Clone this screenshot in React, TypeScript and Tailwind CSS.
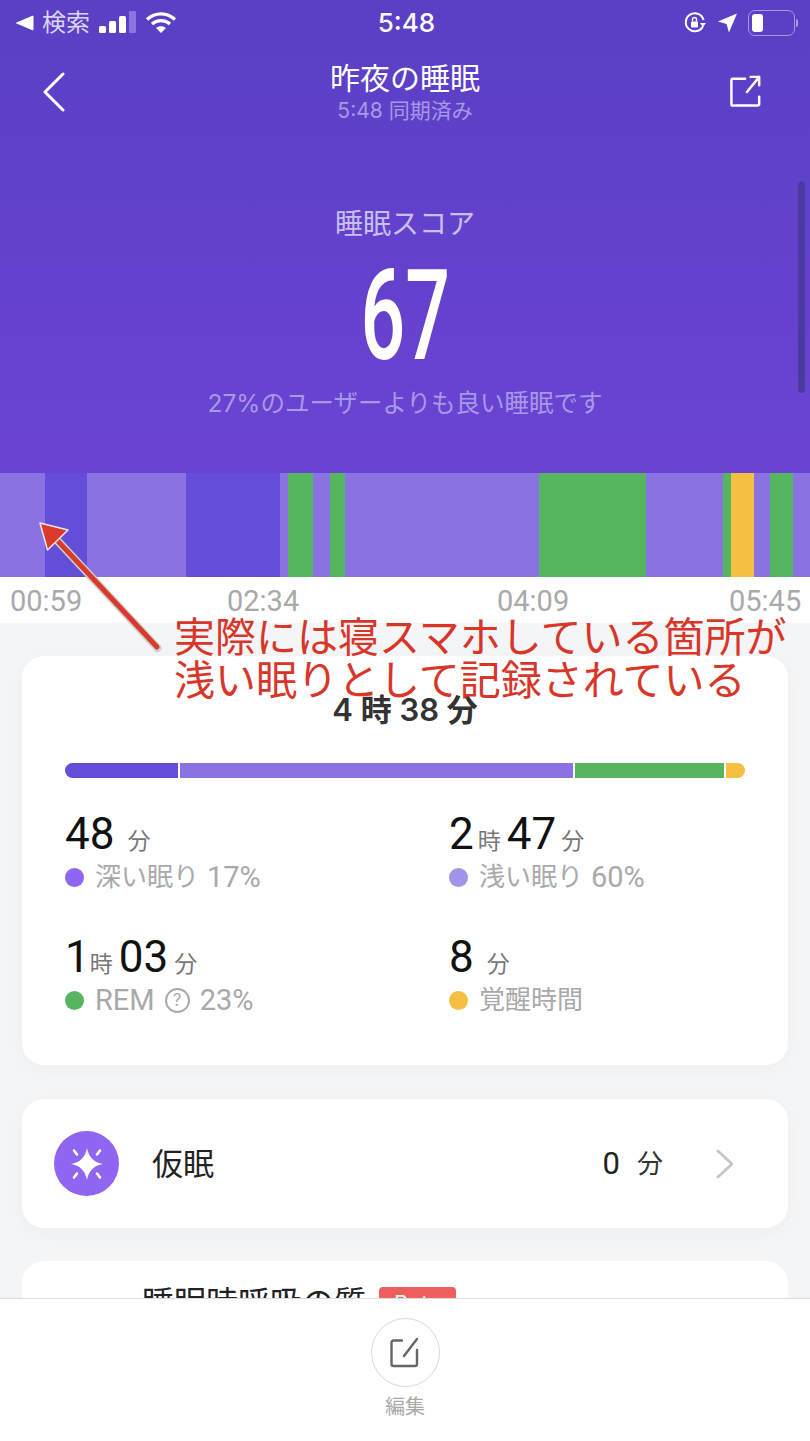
const jp = "font-['Inter','Noto_Sans_CJK_JP',sans-serif]";
const num = "font-['Roboto','Noto_Sans_CJK_JP',sans-serif]";

const chart = [
  "w-[45px] bg-[#8a72e3]",
  "w-[42px] bg-[#644dd8]",
  "w-[99px] bg-[#8a72e3]",
  "w-[94px] bg-[#644dd8]",
  "w-[8px] bg-[#8a72e3]",
  "w-[25px] bg-[#55b65f]",
  "w-[17px] bg-[#8a72e3]",
  "w-[15px] bg-[#55b65f]",
  "w-[194px] bg-[#8a72e3]",
  "w-[107px] bg-[#55b65f]",
  "w-[77px] bg-[#8a72e3]",
  "w-[8px] bg-[#55b65f]",
  "w-[23px] bg-[#f5bf42]",
  "w-[16px] bg-[#8a72e3]",
  "w-[23px] bg-[#55b65f]",
  "w-[17px] bg-[#8a72e3]",
];

function StatusBar() {
  return (
    <div className="flex h-[45px] items-center justify-between pl-[15px] pr-[12px] text-white">
      <div className="flex w-[200px] items-center">
        <svg width="20" height="16" viewBox="0 0 20 16" className="mr-[7px]">
          <path d="M1.5 8 L18 1 V15 Z" fill="#fff" stroke="#fff" strokeLinejoin="round" />
        </svg>
        <span className="text-[24px] leading-none text-[#dcd6f6]">検索</span>
        <svg width="38" height="23" viewBox="0 0 38 23" className="ml-[9px]">
          <rect x="0" y="15" width="7" height="7" rx="1.5" fill="#fff" />
          <rect x="10" y="10" width="7" height="12" rx="1.5" fill="#fff" />
          <rect x="20" y="5" width="7" height="17" rx="1.5" fill="#fff" />
          <rect x="30" y="0" width="7" height="22" rx="1" fill="#8a76dd" />
        </svg>
        <svg width="32" height="24" viewBox="0 0 32 24" className="ml-[8px]" fill="none" stroke="#fff" strokeWidth="3.4">
          <path d="M2 8.5 C10 1 22 1 30 8.5" />
          <path d="M7 13 C12 8.5 20 8.5 25 13" />
          <path d="M16 22 L11 17 C14 14.5 18 14.5 21 17 Z" fill="#fff" stroke="none" />
        </svg>
      </div>
      <span className="text-[26px] font-medium leading-none">5:48</span>
      <div className="flex w-[200px] items-center justify-end gap-[10px]">
        <svg width="24" height="24" viewBox="0 0 24 24" fill="none">
          <path d="M20 15 A9 9 0 1 1 20.5 9" stroke="#fff" strokeWidth="2" />
          <path d="M17 12 h6 l-3 4 z" fill="#fff" />
          <rect x="8" y="10.5" width="7" height="6" rx="1" fill="#fff" />
          <path d="M9.5 10.5 V8.5 a2 2 0 0 1 4 0 V10.5" stroke="#fff" strokeWidth="1.4" />
        </svg>
        <svg width="21" height="22" viewBox="0 0 22 22">
          <path d="M21 1 L12.5 21 L10 12 L1 9.5 Z" fill="#fff" />
        </svg>
        <div className="flex items-center">
          <div className="flex h-[26px] w-[47px] items-center rounded-[7px] border-[1.5px] border-[#a897ea] p-[3px]">
            <div className="h-full w-[11px] rounded-[3px] bg-white" />
          </div>
          <div className="ml-[1px] h-[8px] w-[2px] rounded-r bg-[#a897ea]" />
        </div>
      </div>
    </div>
  );
}

function Hero() {
  return (
    <div className="relative h-[428px] bg-gradient-to-b from-[#5b40c6] to-[#6b43d3]">
      <div className="grid h-[94px] grid-cols-[1fr_auto_1fr] items-start pl-[42px] pr-[48px] pt-[14px] text-white">
        <svg width="24" height="40" viewBox="0 0 24 40" fill="none" stroke="#fff" strokeWidth="3" strokeLinecap="round" strokeLinejoin="round" className="mt-[13px]">
          <path d="M21 2 L3 20 L21 38" />
        </svg>
        <div className="ml-[6px] flex flex-col items-center">
          <span className="text-[30px] leading-[38px]">昨夜の睡眠</span>
          <span className="mt-[1px] text-[21px] leading-[25px] text-[#a899e8]">5:48 同期済み</span>
        </div>
        <svg width="32" height="34" viewBox="0 0 34 36" fill="none" stroke="#fff" strokeWidth="2.6" className="mt-[15px] justify-self-end" strokeLinecap="round" strokeLinejoin="round">
          <path d="M16 5 H3 a1.5 1.5 0 0 0 -1.5 1.5 V32 a1.5 1.5 0 0 0 1.5 1.5 H29.5 a1.5 1.5 0 0 0 1.5 -1.5 V24" />
          <path d="M31 3 H22 M31 3 V12 M31 3 L18 19" />
        </svg>
      </div>
      <div className="flex flex-col items-center pt-[67px]">
        <span className="text-[28px] leading-[36px] text-[#c9bff0]">睡眠スコア</span>
        <span className={`mt-[19px] origin-center scale-x-[0.62] text-[127px] font-medium leading-[110px] text-white ${num}`}>67</span>
        <span className="mt-[16px] text-[24.5px] leading-[32px] text-[#a899e8]">27%のユーザーよりも良い睡眠です</span>
      </div>
      <div className="absolute right-[5px] top-[136px] h-[212px] w-[7px] rounded-full bg-[#4b3aa0]" />
    </div>
  );
}

function Stat({ dot, label, children }: { dot: string; label: React.ReactNode; children: React.ReactNode }) {
  return (
    <div className="h-[123px]">
      <div className="flex h-[49px] items-baseline pt-[6px] text-[#111]">{children}</div>
      <div className="mt-[6px] flex h-[32px] items-center gap-[11px] text-[26px] leading-none text-[#a9a9a9]">
        <span className={`h-[19px] w-[19px] rounded-full ${dot}`} />
        <span className="flex items-center gap-[8px]">{label}</span>
      </div>
    </div>
  );
}

const Num = ({ v }: { v: string }) => <span className={`text-[44px] leading-none ${num}`}>{v}</span>;
const Unit = ({ v, l }: { v: string; l: string }) => <span className={`text-[23px] leading-none text-[#777] ${l}`}>{v}</span>;
const Pct = ({ v }: { v: string }) => <span className={`text-[29px] leading-none ${num}`}>{v}</span>;

function SummaryCard() {
  return (
    <div className="h-[409px] rounded-[22px] bg-white px-[43px] shadow-[0_4px_24px_rgba(0,0,0,0.03)]">
      <div className="pt-[36px] text-center text-[31px] font-semibold leading-[36px] text-[#333]">4 時 38 分</div>
      <div className="mt-[35px] flex h-[15px] overflow-hidden rounded-full">
        <div className="w-[113px] bg-[#644dd8]" />
        <div className="ml-[2px] w-[393px] bg-[#8a72e3]" />
        <div className="ml-[2px] w-[149px] bg-[#55b65f]" />
        <div className="ml-[2px] flex-1 bg-[#f5bf42]" />
      </div>
      <div className="mt-[28px] grid grid-cols-[384px_1fr]">
        <Stat dot="bg-[#8f66f2]" label={<>深い眠り<Pct v="17%" /></>}>
          <Num v="48" /><Unit v="分" l="ml-[13px]" />
        </Stat>
        <Stat dot="bg-[#a293e8]" label={<>浅い眠り<Pct v="60%" /></>}>
          <Num v="2" /><Unit v="時" l="ml-[4px] mr-[6px]" /><Num v="47" /><Unit v="分" l="ml-[5px]" />
        </Stat>
        <Stat
          dot="bg-[#55b65f]"
          label={
            <span className="flex items-center gap-[10px]">
              <Pct v="REM" />
              <span className="flex h-[25px] w-[25px] items-center justify-center rounded-full border-2 border-[#a9a9a9] text-[17px]">?</span>
              <Pct v="23%" />
            </span>
          }
        >
          <Num v="1" /><Unit v="時" l="mr-[6px]" /><Num v="03" /><Unit v="分" l="ml-[6px]" />
        </Stat>
        <Stat dot="bg-[#f5bf42]" label="覚醒時間">
          <Num v="8" /><Unit v="分" l="ml-[13px]" />
        </Stat>
      </div>
    </div>
  );
}

function NapCard() {
  return (
    <div className="mt-[34px] flex h-[129px] items-center rounded-[22px] bg-white pl-[32px] pr-[54px] shadow-[0_4px_24px_rgba(0,0,0,0.03)]">
      <div className="flex h-[65px] w-[65px] items-center justify-center rounded-full bg-[#8f66f2]">
        <svg width="38" height="38" viewBox="0 0 38 38" fill="#fff">
          <path d="M19 3 C20.5 12 26 17.5 35 19 C26 20.5 20.5 26 19 35 C17.5 26 12 20.5 3 19 C12 17.5 17.5 12 19 3 Z" />
          <path d="M6 5.5 L9 9.5 M32 5.5 L29 9.5 M6 32.5 L9 28.5 M32 32.5 L29 28.5" stroke="#fff" strokeWidth="2.6" strokeLinecap="round" />
        </svg>
      </div>
      <span className="ml-[33px] text-[31px] leading-none text-[#222]">仮眠</span>
      <span className={`ml-auto text-[31px] leading-none text-[#222] ${num}`}>0</span>
      <span className="ml-[17px] text-[26px] leading-none text-[#333]">分</span>
      <svg width="18" height="30" viewBox="0 0 18 30" fill="none" stroke="#c4c4c4" strokeWidth="2.6" strokeLinecap="round" strokeLinejoin="round" className="ml-[53px]">
        <path d="M2 2 L16 15 L2 28" />
      </svg>
    </div>
  );
}

function BreathCard() {
  return (
    <div className="mt-[33px] h-[120px] rounded-t-[22px] bg-white pl-[120px] pt-[24px]">
      <div className="flex items-start gap-[13px]">
        <span className="text-[32px] leading-[36px] text-[#222]">睡眠時呼吸の質</span>
        <span className="mt-[2px] rounded-[4px] bg-[#ec5f5c] px-[15px] py-[2px] text-[22px] leading-[28px] text-white">Beta</span>
      </div>
    </div>
  );
}

function BottomBar() {
  return (
    <div className="absolute inset-x-0 bottom-0 flex h-[143px] flex-col items-center border-t border-[#dcdcdc] bg-white pt-[19px]">
      <div className="flex h-[69px] w-[69px] items-center justify-center rounded-full border border-[#d9d9d9]">
        <svg width="32" height="32" viewBox="0 0 32 32" fill="none" stroke="#666" strokeWidth="2.4" strokeLinecap="round" strokeLinejoin="round">
          <path d="M13 3.5 H4.5 a2 2 0 0 0 -2 2 V27 a2 2 0 0 0 2 2 H26 a2 2 0 0 0 2 -2 V13" />
          <path d="M28 2 L15 19" />
        </svg>
      </div>
      <span className="mt-[6px] text-[20px] leading-[28px] text-[#a9a9a9]">編集</span>
    </div>
  );
}

function Annotation() {
  return (
    <>
      <svg width="140" height="140" viewBox="0 0 140 140" className="absolute left-[35px] top-[518px]" fill="none">
        <path d="M122.5 130 L20 20" stroke="#cfcfcf" strokeWidth="8" strokeLinecap="round" />
        <path d="M122 129 L20 20" stroke="#d93a2b" strokeWidth="5" strokeLinecap="round" />
        <path d="M5 5 L33 12 L12.5 32 Z" fill="#d93a2b" stroke="#e8e8e8" strokeWidth="1.5" strokeLinejoin="round" />
      </svg>
      <div className="absolute left-[174px] top-[616px] whitespace-nowrap text-[41px] leading-[43px] text-[#d9362a]">
        <div>実際には寝スマホしている箇所が</div>
        <div>浅い眠りとして記録されている</div>
      </div>
    </>
  );
}

export default function App() {
  return (
    <div className={`relative h-[1441px] w-[810px] overflow-hidden bg-[#f4f5f7] ${jp}`}>
      <div className="bg-[#5b40c6]">
        <StatusBar />
      </div>
      <Hero />
      <div className="flex h-[104px]">
        {chart.map((c, i) => (
          <div key={i} className={c} />
        ))}
      </div>
      <div className={`flex h-[46px] items-center bg-white pl-[10px] pt-[2px] text-[29px] leading-none text-[#a9a9a9] ${num}`}>
        <span className="w-[217px]">00:59</span>
        <span className="w-[270px]">02:34</span>
        <span className="w-[232px]">04:09</span>
        <span>05:45</span>
      </div>
      <div className="px-[22px] pt-[33px]">
        <SummaryCard />
        <NapCard />
        <BreathCard />
      </div>
      <BottomBar />
      <Annotation />
    </div>
  );
}
